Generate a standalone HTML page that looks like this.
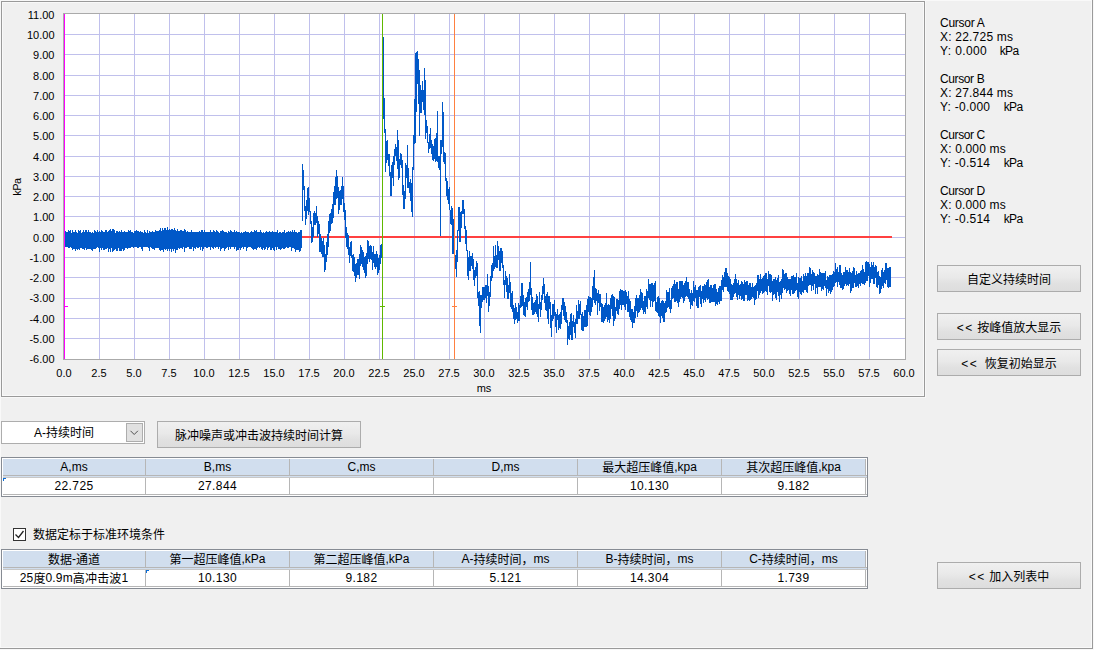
<!DOCTYPE html>
<html lang="zh-CN">
<head>
<meta charset="utf-8">
<title>脉冲噪声或冲击波持续时间计算</title>
<style>
html,body{margin:0;padding:0;}
body{width:1094px;height:650px;overflow:hidden;background:#f0f0f0;position:relative;
 font-family:"Liberation Sans","Noto Sans CJK SC",sans-serif;font-size:12px;color:#000;}
.abs{position:absolute;}
#outer{left:-1px;top:-1px;width:1094px;height:650px;box-sizing:border-box;border:1px solid #9a9a9a;box-shadow:0 0 0 1px #f8f8f8, inset 0 0 0 1px #f9f9f9;}

#plotframe{left:1px;top:1px;width:924px;height:396px;box-sizing:border-box;border:1px solid #9a9a9a;box-shadow:0 0 0 1px #f8f8f8, inset 0 0 0 1px #f9f9f9;}
svg{position:absolute;left:0;top:0;}
.ax{font-family:"Liberation Sans",sans-serif;font-size:11px;fill:#000;}
.cur{left:940px;height:14px;line-height:14px;font-size:12px;white-space:pre;}
.btn{box-sizing:border-box;border:1px solid #acacac;background:linear-gradient(#f0f0f0 0%,#e9e9e9 45%,#e1e1e1 70%,#dddddd 100%);text-align:center;font-size:12px;white-space:pre;}
.lt{letter-spacing:1.5px;}
.tbl{box-sizing:border-box;border:1px solid #868b93;background:#fff;}
.th{background:#d1deee;top:1px;height:16px;box-sizing:border-box;text-align:center;font-size:12px;line-height:16px;}
.td{background:#fff;top:20px;height:16px;text-align:center;font-size:12px;line-height:16px;letter-spacing:0.4px;}
.cj{position:relative;top:1px;}
.vl{background:#b6b6b6;width:1px;}
.hl{background:#b6b6b6;height:1px;}
</style>
</head>
<body>
<div id="outer" class="abs"></div>
<div id="plotframe" class="abs"></div>

<svg width="1094" height="650" viewBox="0 0 1094 650">
 <rect x="63.5" y="13.5" width="842" height="346" fill="#ffffff" stroke="#aaaaaa" stroke-width="1"/>
 <g stroke="#c0c0ec" stroke-width="1" shape-rendering="crispEdges">
  <line x1="99.5" y1="14" x2="99.5" y2="359"/>
  <line x1="134.5" y1="14" x2="134.5" y2="359"/>
  <line x1="169.5" y1="14" x2="169.5" y2="359"/>
  <line x1="204.5" y1="14" x2="204.5" y2="359"/>
  <line x1="239.5" y1="14" x2="239.5" y2="359"/>
  <line x1="274.5" y1="14" x2="274.5" y2="359"/>
  <line x1="309.5" y1="14" x2="309.5" y2="359"/>
  <line x1="344.5" y1="14" x2="344.5" y2="359"/>
  <line x1="379.5" y1="14" x2="379.5" y2="359"/>
  <line x1="414.5" y1="14" x2="414.5" y2="359"/>
  <line x1="449.5" y1="14" x2="449.5" y2="359"/>
  <line x1="484.5" y1="14" x2="484.5" y2="359"/>
  <line x1="519.5" y1="14" x2="519.5" y2="359"/>
  <line x1="554.5" y1="14" x2="554.5" y2="359"/>
  <line x1="589.5" y1="14" x2="589.5" y2="359"/>
  <line x1="624.5" y1="14" x2="624.5" y2="359"/>
  <line x1="659.5" y1="14" x2="659.5" y2="359"/>
  <line x1="694.5" y1="14" x2="694.5" y2="359"/>
  <line x1="729.5" y1="14" x2="729.5" y2="359"/>
  <line x1="764.5" y1="14" x2="764.5" y2="359"/>
  <line x1="799.5" y1="14" x2="799.5" y2="359"/>
  <line x1="834.5" y1="14" x2="834.5" y2="359"/>
  <line x1="869.5" y1="14" x2="869.5" y2="359"/>
  <line x1="64" y1="338.5" x2="905" y2="338.5"/>
  <line x1="64" y1="318.5" x2="905" y2="318.5"/>
  <line x1="64" y1="298.5" x2="905" y2="298.5"/>
  <line x1="64" y1="277.5" x2="905" y2="277.5"/>
  <line x1="64" y1="257.5" x2="905" y2="257.5"/>
  <line x1="64" y1="237.5" x2="905" y2="237.5"/>
  <line x1="64" y1="216.5" x2="905" y2="216.5"/>
  <line x1="64" y1="196.5" x2="905" y2="196.5"/>
  <line x1="64" y1="176.5" x2="905" y2="176.5"/>
  <line x1="64" y1="156.5" x2="905" y2="156.5"/>
  <line x1="64" y1="135.5" x2="905" y2="135.5"/>
  <line x1="64" y1="115.5" x2="905" y2="115.5"/>
  <line x1="64" y1="95.5" x2="905" y2="95.5"/>
  <line x1="64" y1="75.5" x2="905" y2="75.5"/>
  <line x1="64" y1="54.5" x2="905" y2="54.5"/>
  <line x1="64" y1="34.5" x2="905" y2="34.5"/>
 </g>
 <line x1="64" y1="237" x2="892" y2="237" stroke="#ff4040" stroke-width="2"/>
 <path fill="none" stroke="#0058c8" stroke-width="1" shape-rendering="crispEdges" d="M64.5,232V251M65.5,231V247M66.5,232V247M67.5,232V247M68.5,230V248M69.5,231V248M70.5,230V247M71.5,233V248M72.5,230V250M73.5,232V249M74.5,232V249M75.5,230V251M76.5,232V249M77.5,233V250M78.5,230V249M79.5,231V250M80.5,230V248M81.5,233V248M82.5,232V249M83.5,230V249M84.5,232V250M85.5,230V248M86.5,230V250M87.5,232V249M88.5,230V249M89.5,232V249M90.5,232V249M91.5,233V250M92.5,232V251M93.5,233V249M94.5,230V249M95.5,231V249M96.5,232V248M97.5,230V247M98.5,232V248M99.5,231V252M100.5,232V248M101.5,230V250M102.5,231V248M103.5,232V250M104.5,232V250M105.5,230V249M106.5,230V249M107.5,232V248M108.5,231V252M109.5,230V249M110.5,229V252M111.5,231V248M112.5,229V252M113.5,229V251M114.5,230V250M115.5,233V249M116.5,231V251M117.5,231V251M118.5,232V248M119.5,231V251M120.5,232V251M121.5,230V251M122.5,232V249M123.5,232V251M124.5,231V250M125.5,232V248M126.5,232V248M127.5,232V249M128.5,230V248M129.5,231V248M130.5,230V248M131.5,232V247M132.5,232V247M133.5,233V248M134.5,231V247M135.5,231V247M136.5,230V247M137.5,231V248M138.5,231V248M139.5,232V247M140.5,231V247M141.5,232V249M142.5,232V251M143.5,233V247M144.5,230V247M145.5,232V247M146.5,233V247M147.5,230V247M148.5,233V248M149.5,231V251M150.5,232V247M151.5,232V248M152.5,231V249M153.5,232V249M154.5,232V250M155.5,230V248M156.5,231V248M157.5,231V248M158.5,231V248M159.5,230V250M160.5,228V251M161.5,231V250M162.5,228V250M163.5,230V252M164.5,228V249M165.5,228V250M166.5,230V249M167.5,227V251M168.5,230V249M169.5,229V251M170.5,230V249M171.5,229V252M172.5,229V249M173.5,230V251M174.5,228V249M175.5,230V253M176.5,231V250M177.5,229V250M178.5,231V248M179.5,231V249M180.5,230V248M181.5,230V248M182.5,231V249M183.5,231V247M184.5,229V252M185.5,230V248M186.5,232V248M187.5,231V247M188.5,232V247M189.5,232V249M190.5,232V249M191.5,230V249M192.5,232V247M193.5,232V251M194.5,232V248M195.5,232V249M196.5,232V247M197.5,232V248M198.5,232V248M199.5,231V247M200.5,232V250M201.5,230V247M202.5,230V251M203.5,232V249M204.5,230V247M205.5,232V247M206.5,232V248M207.5,232V248M208.5,232V247M209.5,232V247M210.5,230V250M211.5,232V247M212.5,232V248M213.5,230V249M214.5,231V247M215.5,232V248M216.5,230V247M217.5,231V247M218.5,232V249M219.5,233V247M220.5,231V251M221.5,231V249M222.5,230V248M223.5,231V248M224.5,232V251M225.5,232V249M226.5,232V248M227.5,233V247M228.5,231V250M229.5,232V247M230.5,230V249M231.5,231V247M232.5,232V247M233.5,232V247M234.5,230V249M235.5,232V247M236.5,231V251M237.5,232V250M238.5,232V250M239.5,232V248M240.5,233V250M241.5,232V248M242.5,233V247M243.5,232V249M244.5,232V247M245.5,231V247M246.5,232V251M247.5,232V248M248.5,232V247M249.5,233V247M250.5,232V247M251.5,231V248M252.5,232V249M253.5,232V250M254.5,230V249M255.5,231V249M256.5,230V250M257.5,232V248M258.5,232V247M259.5,232V248M260.5,230V247M261.5,232V249M262.5,233V250M263.5,232V248M264.5,233V250M265.5,232V249M266.5,231V247M267.5,232V250M268.5,232V248M269.5,231V247M270.5,232V250M271.5,232V250M272.5,231V248M273.5,232V250M274.5,232V251M275.5,232V247M276.5,232V250M277.5,230V247M278.5,233V249M279.5,232V249M280.5,232V250M281.5,233V249M282.5,232V248M283.5,232V249M284.5,230V249M285.5,233V248M286.5,232V247M287.5,232V248M288.5,231V248M289.5,232V247M290.5,231V247M291.5,232V251M292.5,230V248M293.5,232V248M294.5,230V249M295.5,232V252M296.5,232V250M297.5,233V250M298.5,232V250M299.5,232V252M300.5,230V251M301.5,230V248M302.5,164V221M303.5,170V190M304.5,186V211M305.5,206V225M306.5,200V219M307.5,188V211M308.5,187V215M309.5,198V212M310.5,211V224M311.5,221V243M312.5,227V242M313.5,213V237M314.5,211V225M315.5,213V225M316.5,206V223M317.5,216V237M318.5,221V234M319.5,224V252M320.5,234V252M321.5,238V254M322.5,241V257M323.5,238V257M324.5,245V272M325.5,254V270M326.5,242V262M327.5,234V255M328.5,221V247M329.5,214V233M330.5,213V231M331.5,209V224M332.5,204V223M333.5,192V218M334.5,186V205M335.5,177V205M336.5,170V199M337.5,176V198M338.5,187V214M339.5,191V210M340.5,190V205M341.5,186V205M342.5,177V199M343.5,186V212M344.5,203V220M345.5,210V238M346.5,227V247M347.5,233V249M348.5,235V255M349.5,247V263M350.5,242V256M351.5,241V258M352.5,255V271M353.5,254V272M354.5,257V276M355.5,264V282M356.5,263V278M357.5,259V275M358.5,259V275M359.5,254V279M360.5,245V266M361.5,247V264M362.5,250V267M363.5,252V270M364.5,257V273M365.5,256V278M366.5,253V276M367.5,240V264M368.5,241V259M369.5,246V262M370.5,245V259M371.5,246V260M372.5,252V270M373.5,246V263M374.5,254V267M375.5,254V269M376.5,251V267M377.5,254V275M378.5,258V273M379.5,255V270M380.5,245V264M381.5,244V258M382.5,245V262M383.5,37V119M384.5,98V133M385.5,129V172M386.5,141V163M387.5,140V160M388.5,154V166M389.5,154V176M390.5,172V196M391.5,165V196M392.5,162V178M393.5,156V186M394.5,149V165M395.5,144V156M396.5,147V161M397.5,130V169M398.5,140V180M399.5,159V178M400.5,153V165M401.5,154V168M402.5,160V195M403.5,185V209M404.5,191V209M405.5,163V199M406.5,165V178M407.5,145V188M408.5,168V188M409.5,182V193M410.5,179V201M411.5,183V212M412.5,167V217M413.5,135V170M414.5,99V144M415.5,53V143M416.5,52V112M417.5,51V84M418.5,59V104M419.5,70V136M420.5,85V113M421.5,90V113M422.5,81V102M423.5,90V110M424.5,68V115M425.5,80V139M426.5,120V133M427.5,126V143M428.5,142V153M429.5,134V149M430.5,128V148M431.5,140V154M432.5,144V160M433.5,146V161M434.5,139V159M435.5,138V162M436.5,133V161M437.5,111V162M438.5,156V168M439.5,156V170M440.5,140V236M441.5,140V154M442.5,102V147M443.5,112V162M444.5,152V164M445.5,153V181M446.5,178V196M447.5,181V200M448.5,189V204M449.5,187V210M450.5,210V224M451.5,206V225M452.5,208V254M453.5,219V254M454.5,233V262M455.5,255V269M456.5,250V277M457.5,230V262M458.5,207V231M459.5,207V242M460.5,212V242M461.5,211V228M462.5,200V214M463.5,200V214M464.5,209V229M465.5,226V244M466.5,230V251M467.5,250V276M468.5,257V280M469.5,251V271M470.5,256V271M471.5,256V266M472.5,253V269M473.5,259V280M474.5,270V286M475.5,267V278M476.5,261V276M477.5,263V298M478.5,292V306M479.5,291V326M480.5,295V333M481.5,295V308M482.5,287V302M483.5,287V300M484.5,287V300M485.5,285V298M486.5,285V303M487.5,274V296M488.5,286V312M489.5,292V306M490.5,276V297M491.5,265V281M492.5,263V278M493.5,246V271M494.5,256V269M495.5,245V267M496.5,255V268M497.5,241V268M498.5,246V260M499.5,251V271M500.5,248V271M501.5,248V263M502.5,251V268M503.5,265V285M504.5,280V298M505.5,271V285M506.5,276V292M507.5,278V299M508.5,285V299M509.5,274V293M510.5,282V307M511.5,293V309M512.5,291V312M513.5,305V319M514.5,308V324M515.5,303V320M516.5,307V319M517.5,312V323M518.5,303V321M519.5,305V321M520.5,296V308M521.5,283V307M522.5,283V306M523.5,295V315M524.5,302V316M525.5,298V317M526.5,297V307M527.5,292V310M528.5,289V302M529.5,282V301M530.5,262V295M531.5,288V310M532.5,297V315M533.5,303V315M534.5,302V314M535.5,300V312M536.5,294V314M537.5,296V317M538.5,304V322M539.5,292V309M540.5,302V317M541.5,295V310M542.5,286V300M543.5,278V294M544.5,284V303M545.5,296V310M546.5,294V311M547.5,292V319M548.5,296V324M549.5,296V309M550.5,302V328M551.5,315V337M552.5,304V321M553.5,304V319M554.5,300V316M555.5,312V327M556.5,314V333M557.5,309V320M558.5,315V330M559.5,314V328M560.5,312V329M561.5,305V324M562.5,298V310M563.5,298V316M564.5,302V320M565.5,306V322M566.5,312V323M567.5,320V345M568.5,326V339M569.5,322V340M570.5,314V335M571.5,313V340M572.5,321V340M573.5,315V327M574.5,322V333M575.5,319V338M576.5,305V324M577.5,311V324M578.5,300V319M579.5,304V319M580.5,301V315M581.5,314V330M582.5,312V331M583.5,316V331M584.5,310V327M585.5,310V327M586.5,305V327M587.5,299V326M588.5,296V312M589.5,297V315M590.5,297V316M591.5,298V312M592.5,286V307M593.5,277V300M594.5,270V303M595.5,288V305M596.5,289V301M597.5,293V315M598.5,290V303M599.5,294V311M600.5,294V307M601.5,303V322M602.5,304V322M603.5,307V323M604.5,305V321M605.5,303V319M606.5,293V317M607.5,305V322M608.5,304V320M609.5,305V323M610.5,298V319M611.5,295V309M612.5,294V316M613.5,296V326M614.5,297V321M615.5,307V319M616.5,299V311M617.5,299V314M618.5,300V315M619.5,291V309M620.5,289V305M621.5,290V310M622.5,290V305M623.5,291V305M624.5,291V307M625.5,290V310M626.5,292V304M627.5,296V312M628.5,291V312M629.5,299V317M630.5,301V320M631.5,309V322M632.5,309V328M633.5,312V323M634.5,306V323M635.5,298V318M636.5,295V311M637.5,298V317M638.5,298V313M639.5,295V312M640.5,289V310M641.5,292V308M642.5,293V310M643.5,301V314M644.5,296V312M645.5,296V314M646.5,289V307M647.5,291V309M648.5,279V298M649.5,284V300M650.5,284V307M651.5,283V301M652.5,283V307M653.5,285V302M654.5,283V301M655.5,281V311M656.5,302V312M657.5,297V313M658.5,296V316M659.5,298V317M660.5,303V323M661.5,301V316M662.5,300V318M663.5,301V322M664.5,303V322M665.5,301V313M666.5,290V312M667.5,292V308M668.5,292V307M669.5,288V309M670.5,300V313M671.5,288V309M672.5,286V299M673.5,284V298M674.5,280V302M675.5,284V302M676.5,282V301M677.5,282V303M678.5,289V307M679.5,281V302M680.5,281V299M681.5,281V297M682.5,281V298M683.5,285V303M684.5,283V301M685.5,281V297M686.5,277V296M687.5,282V297M688.5,282V299M689.5,289V302M690.5,293V309M691.5,290V305M692.5,293V306M693.5,281V301M694.5,287V302M695.5,285V298M696.5,290V306M697.5,290V308M698.5,287V308M699.5,286V297M700.5,285V304M701.5,291V307M702.5,286V299M703.5,286V303M704.5,284V300M705.5,285V302M706.5,282V298M707.5,280V300M708.5,279V299M709.5,287V303M710.5,285V303M711.5,285V302M712.5,288V302M713.5,285V302M714.5,284V302M715.5,284V306M716.5,289V304M717.5,292V305M718.5,288V302M719.5,286V304M720.5,286V301M721.5,280V301M722.5,275V290M723.5,277V292M724.5,272V287M725.5,268V287M726.5,268V287M727.5,273V291M728.5,276V292M729.5,277V294M730.5,279V300M731.5,284V300M732.5,285V300M733.5,283V297M734.5,279V294M735.5,274V293M736.5,279V297M737.5,283V300M738.5,280V295M739.5,285V299M740.5,284V296M741.5,281V300M742.5,282V299M743.5,284V301M744.5,280V301M745.5,282V295M746.5,281V295M747.5,281V301M748.5,285V300M749.5,283V301M750.5,283V300M751.5,287V299M752.5,283V297M753.5,287V298M754.5,286V305M755.5,285V300M756.5,283V299M757.5,275V291M758.5,275V298M759.5,279V295M760.5,274V293M761.5,279V291M762.5,278V294M763.5,276V293M764.5,275V292M765.5,273V291M766.5,273V292M767.5,279V295M768.5,271V286M769.5,274V292M770.5,274V293M771.5,275V292M772.5,281V301M773.5,279V295M774.5,279V294M775.5,277V298M776.5,280V300M777.5,278V292M778.5,275V296M779.5,282V302M780.5,281V295M781.5,279V299M782.5,269V293M783.5,270V288M784.5,274V290M785.5,273V289M786.5,273V293M787.5,277V291M788.5,279V290M789.5,279V294M790.5,279V296M791.5,276V290M792.5,276V294M793.5,275V294M794.5,277V293M795.5,277V291M796.5,273V290M797.5,283V297M798.5,277V299M799.5,278V292M800.5,278V294M801.5,276V295M802.5,281V292M803.5,274V293M804.5,276V290M805.5,273V290M806.5,276V292M807.5,273V293M808.5,273V286M809.5,267V285M810.5,268V285M811.5,274V291M812.5,270V286M813.5,272V290M814.5,273V284M815.5,276V294M816.5,276V288M817.5,274V294M818.5,275V287M819.5,269V287M820.5,272V287M821.5,273V291M822.5,273V289M823.5,273V290M824.5,273V286M825.5,271V288M826.5,280V296M827.5,276V289M828.5,277V293M829.5,275V291M830.5,275V294M831.5,275V292M832.5,274V290M833.5,271V287M834.5,272V286M835.5,263V283M836.5,269V282M837.5,267V287M838.5,272V282M839.5,265V285M840.5,265V288M841.5,273V288M842.5,275V290M843.5,272V289M844.5,272V286M845.5,267V284M846.5,270V286M847.5,270V285M848.5,272V286M849.5,268V284M850.5,272V293M851.5,273V291M852.5,271V288M853.5,267V288M854.5,268V283M855.5,275V287M856.5,271V287M857.5,274V286M858.5,273V288M859.5,273V284M860.5,271V286M861.5,270V283M862.5,265V284M863.5,269V284M864.5,272V285M865.5,262V283M866.5,261V281M867.5,262V281M868.5,262V276M869.5,264V287M870.5,267V283M871.5,262V279M872.5,265V279M873.5,262V284M874.5,267V284M875.5,265V278M876.5,266V287M877.5,272V288M878.5,271V285M879.5,276V294M880.5,277V293M881.5,270V289M882.5,268V286M883.5,272V288M884.5,270V283M885.5,263V284M886.5,263V280M887.5,268V287M888.5,268V288M889.5,267V287M890.5,267V287"/>
 <g shape-rendering="crispEdges">
  <line x1="64.5" y1="14" x2="64.5" y2="359" stroke="#ff00ff" stroke-width="1"/>
  <line x1="65" y1="306.5" x2="68" y2="306.5" stroke="#ff00ff" stroke-width="1"/>
  <line x1="382.5" y1="14" x2="382.5" y2="359" stroke="#60b800" stroke-width="1"/>
  <line x1="380" y1="306.5" x2="385" y2="306.5" stroke="#60b800" stroke-width="1"/>
  <line x1="454.5" y1="14" x2="454.5" y2="359" stroke="#ff8040" stroke-width="1"/>
  <line x1="452" y1="306.5" x2="457" y2="306.5" stroke="#ff8040" stroke-width="1"/>
 </g>
 <g class="ax" text-anchor="end">
  <text x="54.5" y="363">-6.00</text>
  <text x="54.5" y="343">-5.00</text>
  <text x="54.5" y="323">-4.00</text>
  <text x="54.5" y="302">-3.00</text>
  <text x="54.5" y="282">-2.00</text>
  <text x="54.5" y="262">-1.00</text>
  <text x="54.5" y="242">0.00</text>
  <text x="54.5" y="221">1.00</text>
  <text x="54.5" y="201">2.00</text>
  <text x="54.5" y="181">3.00</text>
  <text x="54.5" y="161">4.00</text>
  <text x="54.5" y="140">5.00</text>
  <text x="54.5" y="120">6.00</text>
  <text x="54.5" y="100">7.00</text>
  <text x="54.5" y="80">8.00</text>
  <text x="54.5" y="59">9.00</text>
  <text x="54.5" y="39">10.00</text>
  <text x="54.5" y="19">11.00</text>
 </g>
 <g class="ax" text-anchor="middle">
  <text x="64.0" y="377">0.0</text>
  <text x="99.0" y="377">2.5</text>
  <text x="134.0" y="377">5.0</text>
  <text x="169.0" y="377">7.5</text>
  <text x="204.0" y="377">10.0</text>
  <text x="239.0" y="377">12.5</text>
  <text x="274.0" y="377">15.0</text>
  <text x="309.0" y="377">17.5</text>
  <text x="344.0" y="377">20.0</text>
  <text x="379.0" y="377">22.5</text>
  <text x="414.0" y="377">25.0</text>
  <text x="449.0" y="377">27.5</text>
  <text x="484.0" y="377">30.0</text>
  <text x="519.0" y="377">32.5</text>
  <text x="554.0" y="377">35.0</text>
  <text x="589.0" y="377">37.5</text>
  <text x="624.0" y="377">40.0</text>
  <text x="659.0" y="377">42.5</text>
  <text x="694.0" y="377">45.0</text>
  <text x="729.0" y="377">47.5</text>
  <text x="764.0" y="377">50.0</text>
  <text x="799.0" y="377">52.5</text>
  <text x="834.0" y="377">55.0</text>
  <text x="869.0" y="377">57.5</text>
  <text x="904.0" y="377">60.0</text>
  <text x="484" y="392">ms</text>
  <text transform="translate(20.5,187) rotate(-90)" style="letter-spacing:-0.5px">kPa</text>
 </g>
</svg>

<!-- cursor read-outs -->
<div class="abs cur" style="top:16px;letter-spacing:-0.27px;">Cursor A</div>
<div class="abs cur" style="top:30px;letter-spacing:0.21px;">X: 22.725 ms</div>
<div class="abs cur" style="top:44px;letter-spacing:0.38px;">Y: 0.000</div>
<div class="abs cur" style="top:44px;left:999.8px;letter-spacing:-0.7px;">kPa</div>
<div class="abs cur" style="top:72px;letter-spacing:-0.38px;">Cursor B</div>
<div class="abs cur" style="top:86px;letter-spacing:0.21px;">X: 27.844 ms</div>
<div class="abs cur" style="top:100px;letter-spacing:0.25px;">Y: -0.000</div>
<div class="abs cur" style="top:100px;left:1003.8px;letter-spacing:-0.7px;">kPa</div>
<div class="abs cur" style="top:128px;letter-spacing:-0.4px;">Cursor C</div>
<div class="abs cur" style="top:142px;letter-spacing:0.16px;">X: 0.000 ms</div>
<div class="abs cur" style="top:156px;letter-spacing:0.25px;">Y: -0.514</div>
<div class="abs cur" style="top:156px;left:1003.8px;letter-spacing:-0.7px;">kPa</div>
<div class="abs cur" style="top:184px;letter-spacing:-0.4px;">Cursor D</div>
<div class="abs cur" style="top:198px;letter-spacing:0.16px;">X: 0.000 ms</div>
<div class="abs cur" style="top:212px;letter-spacing:0.25px;">Y: -0.514</div>
<div class="abs cur" style="top:212px;left:1003.8px;letter-spacing:-0.7px;">kPa</div>

<!-- right buttons -->
<div class="abs btn" style="left:937px;top:265px;width:144px;height:27px;line-height:29px;">自定义持续时间</div>
<div class="abs btn" style="left:937px;top:313px;width:144px;height:27px;line-height:29px;"><span class="lt">&lt;&lt;</span> 按峰值放大显示</div>
<div class="abs btn" style="left:937px;top:349px;width:144px;height:27px;line-height:29px;"><span class="lt">&lt;&lt;</span>  恢复初始显示</div>
<div class="abs btn" style="left:937px;top:562px;width:144px;height:27px;line-height:29px;"><span class="lt">&lt;&lt;</span> 加入列表中</div>

<!-- combo + compute button -->
<div class="abs" style="left:1px;top:421px;width:144px;height:23px;box-sizing:border-box;border:1px solid #adadad;background:#fff;"></div>
<div class="abs" style="left:2px;top:423px;width:124px;height:21px;line-height:21px;text-align:center;font-size:12px;">A-持续时间</div>
<div class="abs" style="left:126px;top:423px;width:17px;height:19px;box-sizing:border-box;border:1px solid #adadad;background:#e1e1e1;"></div>
<svg width="1094" height="650" viewBox="0 0 1094 650" style="pointer-events:none"><polyline points="130.5,430.8 134.2,434.5 137.9,430.8" fill="none" stroke="#505050" stroke-width="1"/></svg>
<div class="abs btn" style="left:157px;top:421px;width:204px;height:27px;line-height:29px;">脉冲噪声或冲击波持续时间计算</div>

<!-- table 1 -->
<div class="abs tbl" style="left:1px;top:457px;width:867px;height:40px;">
 <div class="abs th" style="left:1px;width:142px;">A,ms</div>
 <div class="abs td" style="left:1px;width:142px;">22.725</div>
 <div class="abs vl" style="left:143px;top:1px;height:36px;"></div>
 <div class="abs th" style="left:144px;width:143px;">B,ms</div>
 <div class="abs td" style="left:144px;width:143px;">27.844</div>
 <div class="abs vl" style="left:287px;top:1px;height:36px;"></div>
 <div class="abs th" style="left:288px;width:143px;">C,ms</div>
 <div class="abs td" style="left:288px;width:143px;"></div>
 <div class="abs vl" style="left:431px;top:1px;height:36px;"></div>
 <div class="abs th" style="left:432px;width:143px;">D,ms</div>
 <div class="abs td" style="left:432px;width:143px;"></div>
 <div class="abs vl" style="left:575px;top:1px;height:36px;"></div>
 <div class="abs th" style="left:576px;width:143px;"><span class="cj">最大超压峰值</span>,kpa</div>
 <div class="abs td" style="left:576px;width:143px;">10.130</div>
 <div class="abs vl" style="left:719px;top:1px;height:36px;"></div>
 <div class="abs th" style="left:720px;width:143px;"><span class="cj">其次超压峰值</span>,kpa</div>
 <div class="abs td" style="left:720px;width:143px;">9.182</div>
 <div class="abs vl" style="left:863px;top:1px;height:36px;"></div>
 <div class="abs hl" style="left:1px;top:17px;width:864px;"></div>
 <div class="abs" style="left:1px;top:18px;width:864px;height:1px;background:#d1deee;"></div>
 <div class="abs hl" style="left:1px;top:19px;width:864px;background:#c8c8c8;"></div>
 <div class="abs hl" style="left:1px;top:36px;width:864px;"></div>
 <div class="abs" style="left:1px;top:20px;width:3px;height:3px;box-sizing:border-box;border-left:1px solid #0a6cd6;border-top:1px solid #0a6cd6;"></div>
</div>

<!-- checkbox -->
<div class="abs" style="left:13px;top:528px;width:13px;height:13px;box-sizing:border-box;border:1px solid #333;background:#fff;"></div>
<svg width="1094" height="650" viewBox="0 0 1094 650" style="pointer-events:none"><polyline points="15.5,534.5 18.5,537.5 23.5,531" fill="none" stroke="#222" stroke-width="1.3"/></svg>
<div class="abs" style="left:33px;top:527px;height:17px;line-height:17px;font-size:12px;white-space:nowrap;">数据定标于标准环境条件</div>

<!-- table 2 -->
<div class="abs tbl" style="left:1px;top:549px;width:867px;height:40px;">
 <div class="abs th" style="left:1px;width:142px;"><span class="cj">数据</span>-<span class="cj">通道</span></div>
 <div class="abs td" style="left:1px;width:142px;letter-spacing:0.15px;">25<span class="cj">度</span>0.9m<span class="cj">高冲击波</span>1</div>
 <div class="abs vl" style="left:143px;top:1px;height:36px;"></div>
 <div class="abs th" style="left:144px;width:143px;"><span class="cj">第一超压峰值</span>,kPa</div>
 <div class="abs td" style="left:144px;width:143px;">10.130</div>
 <div class="abs vl" style="left:287px;top:1px;height:36px;"></div>
 <div class="abs th" style="left:288px;width:143px;"><span class="cj">第二超压峰值</span>,kPa</div>
 <div class="abs td" style="left:288px;width:143px;">9.182</div>
 <div class="abs vl" style="left:431px;top:1px;height:36px;"></div>
 <div class="abs th" style="left:432px;width:143px;">A-<span class="cj">持续时间，</span>ms</div>
 <div class="abs td" style="left:432px;width:143px;">5.121</div>
 <div class="abs vl" style="left:575px;top:1px;height:36px;"></div>
 <div class="abs th" style="left:576px;width:143px;">B-<span class="cj">持续时间，</span>ms</div>
 <div class="abs td" style="left:576px;width:143px;">14.304</div>
 <div class="abs vl" style="left:719px;top:1px;height:36px;"></div>
 <div class="abs th" style="left:720px;width:143px;">C-<span class="cj">持续时间，</span>ms</div>
 <div class="abs td" style="left:720px;width:143px;">1.739</div>
 <div class="abs vl" style="left:863px;top:1px;height:36px;"></div>
 <div class="abs hl" style="left:1px;top:17px;width:864px;"></div>
 <div class="abs" style="left:1px;top:18px;width:864px;height:1px;background:#d1deee;"></div>
 <div class="abs hl" style="left:1px;top:19px;width:864px;background:#c8c8c8;"></div>
 <div class="abs hl" style="left:1px;top:36px;width:864px;"></div>
 <div class="abs" style="left:144px;top:20px;width:3px;height:3px;box-sizing:border-box;border-left:1px solid #0a6cd6;border-top:1px solid #0a6cd6;"></div>
</div>
</body>
</html>
